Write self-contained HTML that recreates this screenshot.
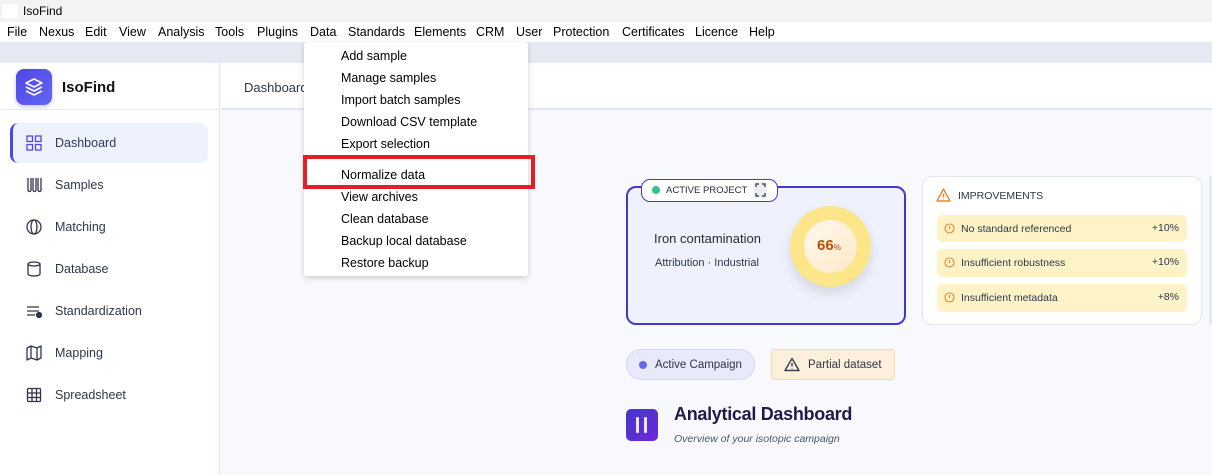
<!DOCTYPE html>
<html><head><meta charset="utf-8"><style>
*{box-sizing:border-box;margin:0;padding:0}
body{width:1212px;height:475px;overflow:hidden;font-family:"Liberation Sans",sans-serif;background:#f8f9fc;position:relative;color:#1f2937}
.abs{position:absolute}
#title{left:0;top:0;width:1212px;height:22px;background:#f3f3f3;font-size:12px;color:#000}
#menu{left:0;top:22px;width:1212px;height:20px;background:#fff;font-size:12.5px;color:#000}
#menu span{position:absolute;top:3px}
#strip{left:0;top:42px;width:1212px;height:21px;background:#e6e9f3}
#side{left:0;top:63px;width:220px;height:412px;background:#fff;border-right:1px solid #e3e7ef}
#head{left:221px;top:63px;width:991px;height:47px;background:#fff;border-bottom:2px solid #e2e7ef}
.nav{position:absolute;left:10px;width:198px;height:40px;font-size:12.5px;color:#2d3748}
.nav svg{position:absolute;left:16px;top:12px}
.nav span{position:absolute;left:45px;top:13px}
#dd{left:304px;top:42px;width:224px;height:234px;background:#fff;border-radius:3px;box-shadow:0 2px 6px rgba(0,0,0,.18);font-size:12.5px;color:#000}
#dd div{position:absolute;left:37px}
</style></head><body>
<div id="title" class="abs"><div class="abs" style="left:2px;top:4px;width:16px;height:14px;background:#fff"></div><span class="abs" style="left:23px;top:4px">IsoFind</span></div>
<div id="menu" class="abs">
<span style="left:7px">File</span><span style="left:39px">Nexus</span><span style="left:85px">Edit</span><span style="left:119px">View</span><span style="left:158px">Analysis</span><span style="left:215px">Tools</span><span style="left:257px">Plugins</span><span style="left:310px">Data</span><span style="left:348px">Standards</span><span style="left:414px">Elements</span><span style="left:476px">CRM</span><span style="left:516px">User</span><span style="left:553px">Protection</span><span style="left:622px">Certificates</span><span style="left:695px">Licence</span><span style="left:749px">Help</span>
</div>
<div id="strip" class="abs"></div>
<div id="side" class="abs">
 <div class="abs" style="left:16px;top:6px;width:36px;height:36px;border-radius:8px;background:linear-gradient(135deg,#4f46e5,#6366f1);box-shadow:0 2px 5px rgba(79,70,229,.3)">
  <svg width="36" height="36" viewBox="0 0 36 36" fill="none" stroke="#fff" stroke-width="1.6" stroke-linejoin="round"><path d="M18 10l-8 4 8 4 8-4z"/><path d="M10 18l8 4 8-4"/><path d="M10 22l8 4 8-4"/></svg>
 </div>
 <div class="abs" style="left:62px;top:16px;font-size:15px;font-weight:bold;color:#111">IsoFind</div>
 <div class="abs" style="left:0;top:46px;width:220px;height:1px;background:#e3e7ef"></div>
 <div class="nav" style="top:60px;background:#eef2fd;border-radius:8px;border-left:3px solid #4f46e5">
  <svg width="16" height="16" viewBox="0 0 16 16" fill="none" stroke="#4f46e5" stroke-width="1.3" style="left:13px"><rect x="1" y="1" width="5.5" height="5.5"/><rect x="9.5" y="1" width="5.5" height="5.5"/><rect x="1" y="9.5" width="5.5" height="5.5"/><rect x="9.5" y="9.5" width="5.5" height="5.5"/></svg>
  <span style="left:42px;color:#2d3a5a">Dashboard</span></div>
 <div class="nav" style="top:102px"><svg width="16" height="16" viewBox="0 0 16 16" fill="none" stroke="#2d3748" stroke-width="1.3"><path d="M2 1v12a1.5 1.5 0 003 0V1M7 1v12a1.5 1.5 0 003 0V1M12 1v12a1.5 1.5 0 003 0V1"/></svg><span>Samples</span></div>
 <div class="nav" style="top:144px"><svg width="16" height="16" viewBox="0 0 16 16" fill="none" stroke="#2d3748" stroke-width="1.3"><circle cx="8" cy="8" r="7"/><ellipse cx="8" cy="8" rx="3" ry="7"/></svg><span>Matching</span></div>
 <div class="nav" style="top:186px"><svg width="16" height="16" viewBox="0 0 16 16" fill="none" stroke="#2d3748" stroke-width="1.3"><ellipse cx="8" cy="3" rx="6" ry="2"/><path d="M2 3v10c0 1.1 2.7 2 6 2s6-.9 6-2V3"/></svg><span>Database</span></div>
 <div class="nav" style="top:228px"><svg width="16" height="16" viewBox="0 0 16 16" fill="none" stroke="#2d3748" stroke-width="1.3"><path d="M1 4h12M1 8h12M1 12h8"/><circle cx="13" cy="12" r="2.5" fill="#2d3748"/></svg><span>Standardization</span></div>
 <div class="nav" style="top:270px"><svg width="16" height="16" viewBox="0 0 16 16" fill="none" stroke="#2d3748" stroke-width="1.3" stroke-linejoin="round"><path d="M1 3l4-2 6 2 4-2v12l-4 2-6-2-4 2z M5 1v12 M11 3v12"/></svg><span>Mapping</span></div>
 <div class="nav" style="top:312px"><svg width="16" height="16" viewBox="0 0 16 16" fill="none" stroke="#2d3748" stroke-width="1.3"><rect x="1.5" y="1.5" width="13" height="13" rx="1"/><path d="M1.5 6h13M1.5 10.5h13M6 1.5v13M10.5 1.5v13"/></svg><span>Spreadsheet</span></div>
</div>
<div id="head" class="abs"><span class="abs" style="left:23px;top:17px;font-size:13px;color:#2d3748">Dashboard</span></div>

<div class="abs" style="left:626px;top:186px;width:280px;height:139px;border:2px solid #4338ca;border-radius:10px;background:#eff2fc"></div>
<div class="abs" style="left:641px;top:179px;width:137px;height:23px;border:1.5px solid #4338ca;border-radius:9px;background:#fff;font-size:9.5px;color:#1f2937">
 <div class="abs" style="left:10px;top:6px;width:8px;height:8px;border-radius:50%;background:#34c38f"></div>
 <span class="abs" style="left:24px;top:5px">ACTIVE PROJECT</span>
 <div class="abs" style="left:112px;top:2px;width:13px;height:16px;background:#eceef2"><svg width="13" height="16" viewBox="0 0 13 16" fill="none" stroke="#333" stroke-width="1.2"><path d="M2 5V2h3M8 2h3v3M11 11v3H8M5 14H2v-3"/></svg></div>
</div>
<div class="abs" style="left:654px;top:231px;font-size:13px;color:#1f2937">Iron contamination</div>
<div class="abs" style="left:655px;top:257px;font-size:11px;color:#2d3748">Attribution · Industrial</div>
<div class="abs" style="left:790px;top:206px;width:81px;height:81px;border-radius:50%;background:#fde68a;box-shadow:0 6px 12px rgba(0,0,0,.12)">
 <div class="abs" style="left:14px;top:14px;width:53px;height:53px;border-radius:50%;background:linear-gradient(135deg,#fff8ee,#fde9c7)"></div>
 <div class="abs" style="left:27px;top:31px;font-size:15px;font-weight:bold;color:#b45309">66<span style="font-size:8px;font-weight:normal;color:#c2410c">%</span></div>
</div>

<div class="abs" style="left:922px;top:176px;width:280px;height:149px;border:1px solid #e3e7ef;border-radius:10px;background:#fff"></div>
<svg class="abs" style="left:936px;top:188px" width="15" height="14" viewBox="0 0 15 14" fill="none" stroke="#e8892b" stroke-width="1.4" stroke-linejoin="round"><path d="M7.5 1L14 13H1z M7.5 5.5v3.5 M7.5 10.5v.8"/></svg>
<div class="abs" style="left:958px;top:190px;font-size:10.5px;color:#2d3748">IMPROVEMENTS</div>
<div class="abs" style="left:937px;top:215px;width:250px;height:27px;border-radius:5px;background:#fef3c7;font-size:10.5px;color:#2d3748"><svg class="abs" style="left:7px;top:8px" width="11" height="11" viewBox="0 0 11 11" fill="none" stroke="#e8892b" stroke-width="1.1"><circle cx="5.5" cy="5.5" r="4.5"/><path d="M5.5 3v3"/></svg><span class="abs" style="left:24px;top:8px">No standard referenced</span><span class="abs" style="right:8px;top:7px">+10%</span></div>
<div class="abs" style="left:937px;top:249px;width:250px;height:28px;border-radius:5px;background:#fef3c7;font-size:10.5px;color:#2d3748"><svg class="abs" style="left:7px;top:8px" width="11" height="11" viewBox="0 0 11 11" fill="none" stroke="#e8892b" stroke-width="1.1"><circle cx="5.5" cy="5.5" r="4.5"/><path d="M5.5 3v3"/></svg><span class="abs" style="left:24px;top:8px">Insufficient robustness</span><span class="abs" style="right:8px;top:7px">+10%</span></div>
<div class="abs" style="left:937px;top:284px;width:250px;height:28px;border-radius:5px;background:#fef3c7;font-size:10.5px;color:#2d3748"><svg class="abs" style="left:7px;top:8px" width="11" height="11" viewBox="0 0 11 11" fill="none" stroke="#e8892b" stroke-width="1.1"><circle cx="5.5" cy="5.5" r="4.5"/><path d="M5.5 3v3"/></svg><span class="abs" style="left:24px;top:8px">Insufficient metadata</span><span class="abs" style="right:8px;top:7px">+8%</span></div>
<div class="abs" style="left:1209px;top:176px;width:3px;height:149px;background:#e6e9ef"></div>

<div class="abs" style="left:626px;top:349px;width:129px;height:31px;border:1px solid #d4d7f3;border-radius:16px;background:#e8e9fb;font-size:11.5px;color:#2d3748"><div class="abs" style="left:12px;top:11px;width:8px;height:8px;border-radius:50%;background:#6366f1"></div><span class="abs" style="left:28px;top:9px">Active Campaign</span></div>
<div class="abs" style="left:771px;top:349px;width:124px;height:31px;border:1px solid #f6d9a8;border-radius:4px;background:#fcefdc;font-size:11.5px;color:#2d3748"><svg class="abs" style="left:12px;top:7px" width="16" height="15" viewBox="0 0 16 15" fill="none" stroke="#374151" stroke-width="1.4" stroke-linejoin="round"><path d="M8 1.5L15 13.5H1z M8 6v3.5 M8 11v.5"/></svg><span class="abs" style="left:36px;top:9px">Partial dataset</span></div>

<div class="abs" style="left:626px;top:409px;width:32px;height:32px;border-radius:5px;background:linear-gradient(135deg,#4338ca,#6d28d9)"><div class="abs" style="left:10px;top:8px;width:3px;height:16px;background:#e5e7eb;border-radius:1px"></div><div class="abs" style="left:18px;top:8px;width:3px;height:16px;background:#e5e7eb;border-radius:1px"></div></div>
<div class="abs" style="left:674px;top:404px;font-size:18px;font-weight:bold;color:#1e1b4b;letter-spacing:-.3px">Analytical Dashboard</div>
<div class="abs" style="left:674px;top:433px;font-size:10.5px;font-style:italic;color:#4b5563">Overview of your isotopic campaign</div>

<div id="dd" class="abs">
<div style="top:7px">Add sample</div><div style="top:29px">Manage samples</div><div style="top:51px">Import batch samples</div><div style="top:73px">Download CSV template</div><div style="top:95px">Export selection</div><div style="top:126px">Normalize data</div><div style="top:148px">View archives</div><div style="top:170px">Clean database</div><div style="top:192px">Backup local database</div><div style="top:214px">Restore backup</div>
</div>
<div class="abs" style="left:303px;top:155px;width:232px;height:34px;border:4px solid #e31e24"></div>
</body></html>
